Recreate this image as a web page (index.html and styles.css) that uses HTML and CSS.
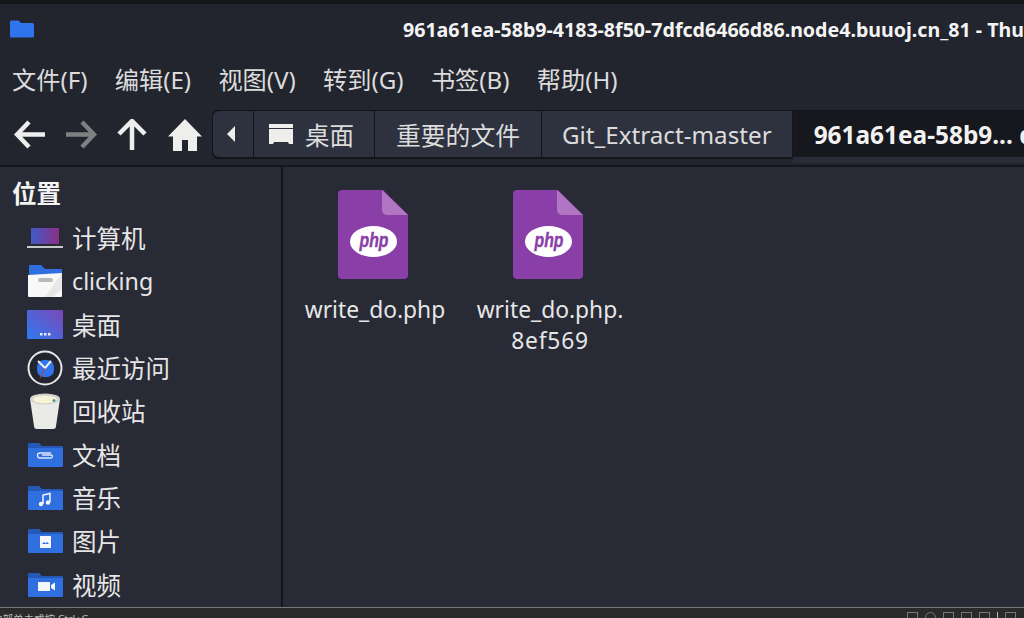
FILE: index.html
```html
<!DOCTYPE html>
<html>
<head>
    <meta charset="utf-8">
    <title>Thunar</title>
    <link rel="stylesheet" href="styles.css">
</head>
<body>
<div class="window">
    <div class="titlebar">
        <svg class="title-icon" width="24" height="18" viewBox="0 0 24 18"><path d="M0 2q0-1.500 1.500-1.500h7l2.500 2.500h11.500q1.500 0 1.500 1.500v11.500q0 1.500-1.500 1.500h-21q-1.500 0-1.500-1.500z" fill="#2f74ec"/></svg>
        <div class="title">961a61ea-58b9-4183-8f50-7dfcd6466d86.node4.buuoj.cn_81 - Thunar</div>
    </div>

    <div class="menubar">
        <span>文件(F)</span>
        <span>编辑(E)</span>
        <span>视图(V)</span>
        <span>转到(G)</span>
        <span>书签(B)</span>
        <span>帮助(H)</span>
    </div>

    <div class="toolbar">
        <div class="nav">
            <svg width="32" height="32" viewBox="0 0 32 32"><path d="M15 3L3 15.500 15 28M3 15.500h28" fill="none" stroke="#eeeeec" stroke-width="4.500"/></svg>
            <svg width="32" height="32" viewBox="0 0 32 32"><path d="M17 3l12 12.500L17 28M29 15.500H1" fill="none" stroke="#7f8082" stroke-width="4.500"/></svg>
            <svg width="32" height="32" viewBox="0 0 32 32"><path d="M3 15L16 2l13 13M16 3v28" fill="none" stroke="#eeeeec" stroke-width="4.500"/></svg>
            <svg width="36" height="34" viewBox="0 0 36 34"><path d="M18 1L1 18.500h5V33h9V22h6v11h9V18.500h5z" fill="#eeeeec"/></svg>
        </div>
        <div class="path">
            <div class="crumb crumb-arrow"><svg width="8" height="16" viewBox="0 0 8 16"><path d="M8 0v16L0 8z" fill="#eeeeec"/></svg></div>
            <div class="crumb crumb-desk">
                <svg width="24" height="20" viewBox="0 0 24 20"><path d="M0 0h24v4H0zM0 5h24v15h-4l-1-2H5l-1 2H0z" fill="#eeeeec"/></svg>
                <span>桌面</span>
            </div>
            <div class="crumb crumb-cjk">重要的文件</div>
            <div class="crumb crumb-latin">Git_Extract-master</div>
            <div class="crumb-current">961a61ea-58b9... d86.node4</div>
        </div>
    </div>

    <div class="main">
        <div class="sidebar">
            <div class="side-head">位置</div>
            <div class="side-item">
                <svg class="side-icon" width="36" height="24" viewBox="0 0 36 24"><defs><linearGradient id="lap" x1="0" y1="0" x2="1" y2="0"><stop offset="0" stop-color="#3f5bc8"/><stop offset="1" stop-color="#8c2f86"/></linearGradient></defs><rect x="3" y="1" width="30" height="18" fill="#262833"/><rect x="4" y="2" width="28" height="16" fill="url(#lap)"/><rect x="0" y="20" width="36" height="2" fill="#c8c9cc"/></svg>
                <span>计算机</span>
            </div>
            <div class="side-item">
                <svg class="side-icon" width="36" height="34" viewBox="0 0 36 34"><path d="M2 6V2q0-1 1-1h11l4 4h17v6H2z" fill="#2f6fdf"/><path d="M1 11l34-2v23q0 1-1 1H2q-1 0-1-1z" fill="#f8f8f8"/><path d="M35 9v16l-9 8h-8z" fill="#e8e8e8"/><rect x="11" y="14" width="15" height="4" rx="2" fill="#b9b9b9"/></svg>
                <span class="side-latin">clicking</span>
            </div>
            <div class="side-item">
                <svg class="side-icon" width="36" height="29" viewBox="0 0 36 29"><defs><linearGradient id="desk" x1="0" y1="1" x2="1" y2="0"><stop offset="0" stop-color="#2d7bf0"/><stop offset="1" stop-color="#7b47b8"/></linearGradient></defs><rect width="36" height="29" rx="1" fill="url(#desk)"/><rect x="13" y="23" width="2.500" height="2.500" fill="#e8ecf8"/><rect x="17" y="23" width="2.500" height="2.500" fill="#e8ecf8"/><rect x="21" y="23" width="2.500" height="2.500" fill="#e8ecf8"/></svg>
                <span>桌面</span>
            </div>
            <div class="side-item">
                <svg class="side-icon" width="36" height="36" viewBox="0 0 36 36"><circle cx="18" cy="18" r="16.500" fill="#23252e" stroke="#e8e8e8" stroke-width="2"/><rect x="10" y="10" width="17" height="17" rx="7" fill="#2f74ec"/><path d="M11 11l7 7 6-7" fill="none" stroke="#f0f0f0" stroke-width="2"/><path d="M18 18l-5 10" stroke="#c0392b"/></svg>
                <span>最近访问</span>
            </div>
            <div class="side-item">
                <svg class="side-icon" width="36" height="36" viewBox="-2 0 36 36"><path d="M1 6l4 27q0 3 3 3h16q3 0 3-3l4-27z" fill="#eaeae6"/><ellipse cx="16" cy="6" rx="15" ry="5.500" fill="#d4d4ce"/><ellipse cx="16" cy="6.500" rx="12" ry="3.800" fill="#f7f3d6"/><circle cx="25" cy="7.500" r="1.500" fill="#3d9d94"/></svg>
                <span>回收站</span>
            </div>
            <div class="side-item">
                <svg class="side-icon" width="36" height="27" viewBox="0 0 36 27"><use href="#folder"/><path d="M24 12h-11a2.500 2.500 0 0 0 0 5h11a1.500 1.500 0 0 0 0-3h-9" fill="none" stroke="#dfe8fb" stroke-width="1.300"/></svg>
                <span>文档</span>
            </div>
            <div class="side-item">
                <svg class="side-icon" width="36" height="27" viewBox="0 0 36 27"><use href="#folder"/><path d="M16 20v-9l7-1.500V18" fill="none" stroke="#f4f6fc" stroke-width="1.500"/><circle cx="14" cy="20" r="2.200" fill="#f4f6fc"/><circle cx="21" cy="18.500" r="2.200" fill="#f4f6fc"/></svg>
                <span>音乐</span>
            </div>
            <div class="side-item">
                <svg class="side-icon" width="36" height="27" viewBox="0 0 36 27"><use href="#folder"/><path d="M13 9h11v12H13z" fill="#f4f6fc"/><path d="M15 17l2-2 1.500 1.500 1.500-1.500 2 2z" fill="#2f6fdf"/></svg>
                <span>图片</span>
            </div>
            <div class="side-item">
                <svg class="side-icon" width="36" height="27" viewBox="0 0 36 27"><use href="#folder"/><path d="M11 11h12v9H11zM24 14l4-2.500v8L24 17z" fill="#f4f6fc"/></svg>
                <span>视频</span>
            </div>
        </div>

        <div class="files">
            <div class="file">
                <svg class="file-icon" width="70" height="90" viewBox="0 0 70 90"><use href="#php"/></svg>
                <div class="file-name">write_do.php</div>
            </div>
            <div class="file">
                <svg class="file-icon" width="70" height="90" viewBox="0 0 70 90"><use href="#php"/></svg>
                <div class="file-name">write_do.php.<br><span class="file-ext">8ef569</span></div>
            </div>
        </div>
    </div>

    <div class="statusbar">
        <div class="status-text">内部单击或按 Ctrl+G</div>
        <div class="tray">
            <i></i><i class="round"></i><i></i><i></i><i></i><b></b><i></i>
        </div>
    </div>
</div>

<svg class="defs" width="0" height="0">
    <defs>
        <g id="folder">
            <path d="M1 3q0-1 1-1h10l3 3h20q1 0 1 1v4H1z" fill="#2459b8"/>
            <path d="M1 7h35v18q0 1-1 1H2q-1 0-1-1z" fill="#2f6fdf"/>
        </g>
        <g id="php">
            <path d="M4 0h41l25 25v60q0 4-4 4H4q-4 0-4-4V4q0-4 4-4z" fill="#8a3ea8"/>
            <path d="M44 0l26 25H50q-6 0-6-6z" fill="#b075c3"/>
            <ellipse cx="35.500" cy="51.500" rx="23.500" ry="15.500" fill="#fff"/>
            <text x="36" y="57" class="php-text" textLength="29" lengthAdjust="spacingAndGlyphs">php</text>
        </g>
    </defs>
</svg>
</body>
</html>
```

FILE: styles.css
```css
* {box-sizing: border-box}

html, body {
    margin: 0;
    height: 100%;
    overflow: hidden;
}

body {
    font-family: "Noto Sans", "Noto Sans CJK SC", sans-serif;
    background-color: #282a36;
    color: #eeeeec;
}

.window {
    display: flex;
    flex-direction: column;
    height: 618px;
    border-top: 4px solid #14161a;
}

.titlebar {
    display: flex;
    align-items: center;
    height: 50px;
    padding-left: 10px;
    background-color: #22252e;
    flex-shrink: 0;
}

.title-icon {
    flex-shrink: 0;
}

.title {
    margin-left: 369px;
    font-size: 19.600px;
    font-weight: 700;
    white-space: nowrap;
    color: #f4f4f4;
}

.menubar {
    display: flex;
    align-items: center;
    gap: 27.300px;
    height: 50px;
    padding: 0 12px 2px;
    background-color: #22252e;
    font-size: 24.200px;
    color: #dcdcdc;
    flex-shrink: 0;
    white-space: nowrap;
}

.toolbar {
    display: flex;
    align-items: center;
    height: 63px;
    padding-left: 14px;
    background-color: #22252e;
    border-bottom: 2px solid #15161b;
    flex-shrink: 0;
}

.nav {
    display: flex;
    align-items: center;
    gap: 19px;
    margin-right: 9px;
    flex-shrink: 0;
}

.path {
    display: flex;
    height: 49px;
    flex-shrink: 0;
    border-radius: 6px 0 0 6px;
    background-color: #14151a;
    padding: 1px 0 2px 1px;
    white-space: nowrap;
}

.crumb {
    display: flex;
    align-items: center;
    gap: 12px;
    background-color: #2e323f;
    margin-right: 1px;
    color: #dcdcdc;
}

.crumb-arrow {
    width: 40px;
    justify-content: center;
    padding-right: 4px;
    border-radius: 6px 0 0 6px;
}

.crumb-desk {
    width: 120px;
    padding-left: 15px;
    font-size: 24.500px;
}

.crumb-cjk {
    padding: 0 21px;
    font-size: 24.800px;
}

.crumb-latin {
    padding: 0 20px;
    font-size: 24.200px;
}

.crumb-current {
    display: flex;
    align-items: center;
    padding-left: 21px;
    background-color: #16181d;
    box-shadow: 0 6px 0 #2a2d38;
    font-size: 24.400px;
    font-weight: 700;
    color: #f2f2f2;
}

.main {
    display: flex;
    flex: 1;
    min-height: 0;
}

.sidebar {
    width: 283px;
    flex-shrink: 0;
    padding-left: 13px;
    border-right: 2px solid #15161b;
    overflow: hidden;
}

.side-head {
    height: 49px;
    margin-left: -1px;
    padding-top: 8px;
    font-size: 24.500px;
    font-weight: 700;
    color: #f4f4f4;
}

.side-item {
    display: flex;
    align-items: center;
    height: 43.300px;
    font-size: 24.500px;
    color: #e6e6e6;
}

.side-latin {
    font-size: 23.200px;
}

.side-icon {
    flex-shrink: 0;
    margin: 0 9px 0 14px;
}

.files {
    display: flex;
    align-items: flex-start;
    flex: 1;
    padding: 23px 0 0 10px;
    gap: 15px;
}

.file {
    width: 160px;
    display: flex;
    flex-direction: column;
    align-items: center;
    font-size: 22.800px;
    color: #e6e6e6;
}

.file-icon {
    margin-bottom: 14px;
}

.file-name {
    margin-left: 4px;
    text-align: center;
    line-height: 31px;
    white-space: nowrap;
}

.file-ext {
    letter-spacing: 0.800px;
}

.php-text {
    font-family: "Liberation Sans", sans-serif;
    font-size: 20px;
    font-weight: 700;
    font-style: italic;
    text-anchor: middle;
    fill: #8a3ea8;
    stroke: #8a3ea8;
    stroke-width: 0.400px;
}

.statusbar {
    display: flex;
    justify-content: space-between;
    height: 11px;
    flex-shrink: 0;
    overflow: hidden;
    background-color: #2a2a2a;
    border-top: 1px solid #777;
    color: #bbb;
    font-size: 10.500px;
}

.status-text {
    margin-left: -8px;
    line-height: 22px;
}

.tray {
    display: flex;
    gap: 7px;
    padding: 4px 8px 0 0;
}

.tray i {
    width: 11px;
    height: 11px;
    border: 1px solid #777;
}

.tray .round {
    border-radius: 50%;
}

.tray b {
    width: 1px;
    height: 11px;
    background-color: #bbb;
}

.defs {
    position: absolute;
}
```
